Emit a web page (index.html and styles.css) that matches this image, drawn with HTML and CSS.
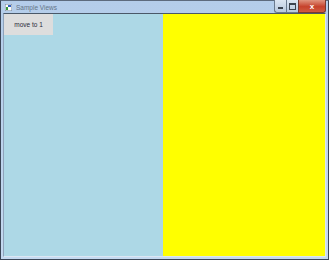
FILE: index.html
```html
<!DOCTYPE html>
<html lang="en">
<head>
  <meta charset="UTF-8">
  <title>Sample Views</title>
  <link rel="stylesheet" href="styles.css">
</head>
<body>
  <div class="window">
    <div class="titlebar">
      <span class="app-icon">
        <svg width="7" height="7" viewBox="0 0 7 7">
          <rect x="0" y="0" width="7" height="7" fill="#ffffff" stroke="#6c7c90" stroke-width="1"/>
          <rect x="1" y="3" width="2" height="3" fill="#3a9a3a"/>
          <rect x="3" y="1" width="3" height="2" fill="#3060c0"/>
        </svg>
      </span>
      <span class="title">Sample Views</span>
      <div class="caption-buttons">
        <div class="cap-btn cap-min"><span class="min-glyph"></span></div>
        <div class="cap-btn cap-max"><span class="max-glyph"></span></div>
        <div class="cap-btn cap-close">x</div>
      </div>
    </div>
    <div class="client">
      <div class="pane pane-left">
        <button class="move-btn">move to 1</button>
      </div>
      <div class="pane pane-right"></div>
    </div>
  </div>
</body>
</html>
```

FILE: styles.css
```css
body {
  margin: 0;
  background: #ffffff;
  font-family: "Liberation Sans", Arial, sans-serif;
}
.window {
  width: 323px;
  height: 256px;
  border: 1px solid #3b4656;
  border-top-color: #5d6b7e;
  background: linear-gradient(#b4cdea, #c4d9f0);
  display: flex;
  flex-direction: column;
  padding: 0 2px 2px 2px;
  box-sizing: content-box;
}
.titlebar {
  height: 12px;
  display: flex;
  align-items: center;
  position: relative;
}
.app-icon {
  display: flex;
  margin-left: 2px;
  margin-right: 4px;
}
.title {
  font-size: 6.5px;
  color: #4a5666;
  opacity: 0.75;
}
.caption-buttons {
  position: absolute;
  right: 0;
  top: -1px;
  display: flex;
}
.cap-btn {
  height: 13px;
  border: 1px solid #6a7a8e;
  border-top: none;
  display: flex;
  align-items: center;
  justify-content: center;
  box-sizing: border-box;
}
.cap-min,
.cap-max {
  width: 12px;
  background: linear-gradient(#dce6f2, #b8c8dc);
  border-right: none;
}
.cap-min {
  border-radius: 0 0 0 3px;
}
.min-glyph {
  width: 5px;
  height: 2px;
  background: #3c4450;
  margin-top: 4px;
}
.max-glyph {
  width: 5px;
  height: 4px;
  border: 1px solid #3c4450;
  border-top-width: 2px;
}
.cap-close {
  width: 28px;
  background: linear-gradient(#e0957f, #c6422c 55%, #d05c40);
  border-color: #7a3a30;
  border-radius: 0 0 3px 0;
  color: #ffffff;
  font-size: 8px;
  font-weight: bold;
}
.client {
  flex: 1;
  display: flex;
  border-top: 1px solid #4a5868;
  border-left: 1px solid #8fa3bb;
  border-right: 1px solid #dbe6f3;
  border-bottom: 1px solid #dbe6f3;
}
.pane-left {
  flex: 0 0 159px;
  background: #add8e6;
}
.pane-right {
  flex: 1;
  background: #ffff00;
}
.move-btn {
  width: 49px;
  height: 21px;
  background: #dddddd;
  border: none;
  padding: 0;
  font-family: "Liberation Sans", Arial, sans-serif;
  font-size: 6.5px;
  color: #2a2a3a;
  display: block;
}
```
